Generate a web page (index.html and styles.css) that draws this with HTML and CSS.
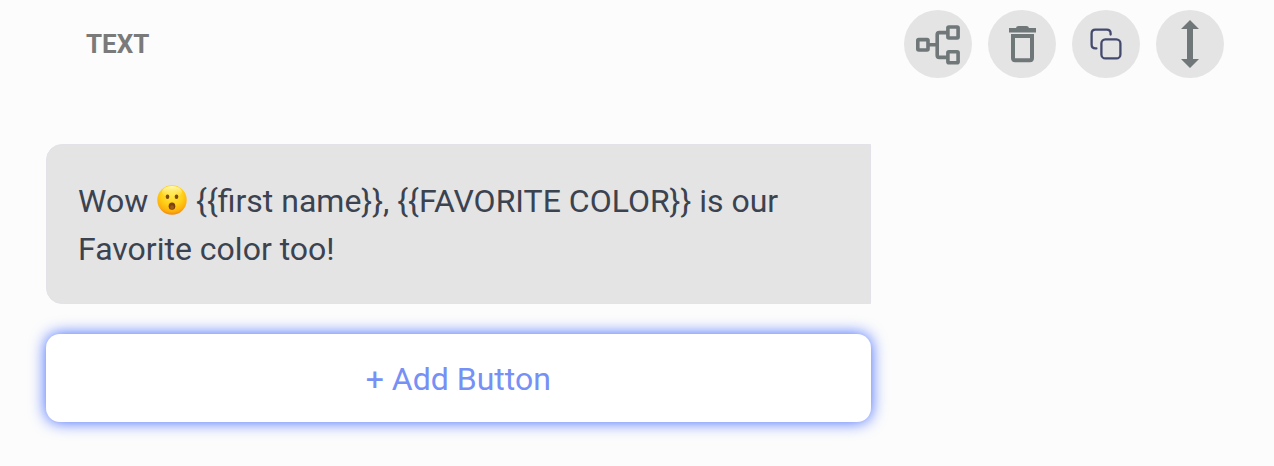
FILE: index.html
```html
<!DOCTYPE html>
<html lang="en">
<head>
    <meta charset="UTF-8">
    <meta name="viewport" content="width=device-width, initial-scale=1.0">
    <title>Text block</title>
    <link rel="stylesheet" href="styles.css">
</head>
<body>
    <header class="block-header">
        <h1 class="block-title">TEXT</h1>
        <div class="actions">
            <button type="button" class="icon-button" aria-label="Connections">
                <svg viewBox="0 0 68 68" fill="none" stroke="#6f7779" stroke-width="3.6">
                    <rect x="13.8" y="29.6" width="10.2" height="10.4" rx="1"/>
                    <rect x="43.9" y="17" width="10.2" height="11" rx="1"/>
                    <rect x="43.9" y="41.8" width="10.2" height="11" rx="1"/>
                    <path d="M25 34.8H33M43 22.6H35.3Q33.2 22.6 33.2 24.7V45.3Q33.2 47.4 35.3 47.4H43"/>
                </svg>
            </button>
            <button type="button" class="icon-button" aria-label="Delete">
                <svg viewBox="0 0 68 68" fill="none" stroke="#6f7779" stroke-width="4">
                    <path d="M21 18H28Q28.5 16 30.5 16H38.5Q40.5 16 41 18H48V22.4H21Z" fill="#6f7779" stroke="none"/>
                    <path d="M25 26H44V48Q44 50.2 41.8 50.2H27.2Q25 50.2 25 48Z"/>
                </svg>
            </button>
            <button type="button" class="icon-button" aria-label="Duplicate">
                <svg viewBox="0 0 68 68" fill="none" stroke="#444a6d" stroke-width="2.3" stroke-linecap="round">
                    <rect x="29.4" y="29.4" width="19" height="19" rx="4"/>
                    <path d="M38.6 24.5V23.5Q38.6 19.7 34.8 19.7H23.4Q19.6 19.7 19.6 23.5V34.6Q19.6 38.4 23.4 38.4H24.4"/>
                </svg>
            </button>
            <button type="button" class="icon-button" aria-label="Move">
                <svg viewBox="0 0 68 68" fill="#6f7779">
                    <path d="M34 10L43 19H37V49H43L34 58L25 49H31V19H25Z"/>
                </svg>
            </button>
        </div>
    </header>

    <main class="block-body">
        <p class="message">Wow <svg class="emoji" viewBox="0 0 30 30" aria-hidden="true">
                <defs>
                    <radialGradient id="face" cx="50%" cy="32%" r="68%">
                        <stop offset="0" stop-color="#ffe94a"/>
                        <stop offset="0.55" stop-color="#ffcf16"/>
                        <stop offset="0.85" stop-color="#fdae0b"/>
                        <stop offset="1" stop-color="#f08a10"/>
                    </radialGradient>
                    <linearGradient id="shine" x1="0" y1="0" x2="0" y2="1">
                        <stop offset="0" stop-color="#fffbc0"/>
                        <stop offset="1" stop-color="#ffe94a" stop-opacity="0"/>
                    </linearGradient>
                </defs>
                <circle cx="15" cy="15" r="14.7" fill="url(#face)"/>
                <ellipse cx="15" cy="7" rx="10" ry="6" fill="url(#shine)"/>
                <ellipse cx="10.5" cy="11.8" rx="1.8" ry="2.3" fill="#7a4a0c"/>
                <ellipse cx="19.5" cy="11.8" rx="1.8" ry="2.3" fill="#7a4a0c"/>
                <ellipse cx="15" cy="21.2" rx="3.3" ry="3.6" fill="#7a3f06"/>
                <ellipse cx="15" cy="22.2" rx="2" ry="2" fill="#9a5a1a"/>
            </svg> {{first name}}, {{FAVORITE COLOR}} is our Favorite color too!</p>
        <button type="button" class="add-button">+ Add Button</button>
    </main>
</body>
</html>
```

FILE: styles.css
```css
* {
    box-sizing: border-box;
}

body {
    margin: 0;
    padding: 10px 50px 44px 46px;
    background-color: #fcfcfc;
    font-family: Roboto, sans-serif;
}

.block-header {
    display: flex;
    justify-content: space-between;
    align-items: center;
    padding-left: 40px;
    margin-bottom: 66px;
}

.block-title {
    margin: 0;
    color: #7a7a7a;
    font-size: 26px;
    font-weight: 700;
    line-height: 32px;
}

.actions {
    display: flex;
    gap: 16px;
}

.icon-button {
    width: 68px;
    height: 68px;
    padding: 0;
    border: none;
    border-radius: 50%;
    background-color: #e4e4e4;
    cursor: pointer;
}

.icon-button svg {
    display: block;
    width: 100%;
    height: 100%;
}

.block-body {
    display: flex;
    flex-direction: column;
    gap: 30px;
    width: 70%;
}

.message {
    margin: 0;
    padding: 32px 31px 30px;
    border: 1px solid #e2e2e8;
    border-radius: 16px 0 0 16px;
    background-color: #e4e4e4;
    color: #3b4250;
    font-size: 32px;
    line-height: 48px;
}

.emoji {
    width: 30px;
    height: 30px;
    margin: 0 1px;
    vertical-align: -3px;
}

.add-button {
    padding: 21px 20px 19px;
    border: none;
    border-radius: 14px;
    background-color: #fff;
    box-shadow: 0 0 16px #3c64ff;
    color: #7690f5;
    font-family: inherit;
    font-size: 32px;
    line-height: 48px;
    cursor: pointer;
}
```
